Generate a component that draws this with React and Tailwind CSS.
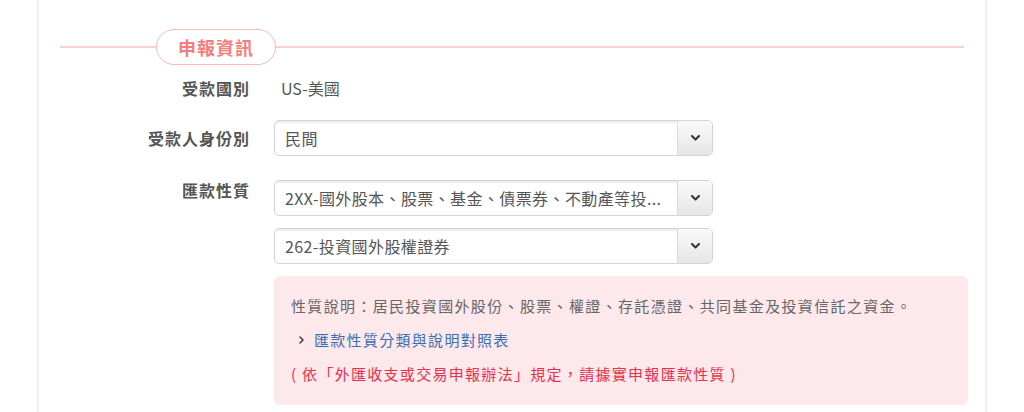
import React from 'react';

const font = { fontFamily: '"Noto Sans CJK TC", "Noto Sans", sans-serif' };

function Chevron() {
  return (
    <svg width="9" height="6" viewBox="0 0 9 6" fill="none">
      <path d="M1 1 L4.5 4.5 L8 1" stroke="#333" strokeWidth="2" strokeLinecap="round" strokeLinejoin="round" />
    </svg>
  );
}

function Select({ value }) {
  return (
    <div className="flex h-[36px] w-[439px] overflow-hidden rounded-[5px] border border-[#d4d4d4] bg-white shadow-[inset_0_2px_2px_rgba(0,0,0,0.08)]">
      <div className="flex flex-1 items-center overflow-hidden whitespace-nowrap pl-[10px] text-[16px] tracking-[0.4px] text-[#555]">
        {value}
      </div>
      <div className="flex w-[35px] items-center justify-center border-l border-[#dcdcdc] bg-gradient-to-b from-[#fafafa] to-[#e6e6e6]">
        <Chevron />
      </div>
    </div>
  );
}

function Row({ label, children, className = '' }) {
  return (
    <div className={`flex ${className}`}>
      <div className="w-[190px] shrink-0 text-right text-[16px] font-semibold tracking-[1px] text-[#555]">{label}</div>
      <div className="ml-[24px] flex flex-col gap-[12px]">{children}</div>
    </div>
  );
}

export default function App() {
  return (
    <div className="min-h-[412px] bg-white" style={font}>
      <div className="mx-auto h-[412px] w-[950px] border-x-2 border-[#eeeeee] px-[21px] pt-[29px]">
        {/* section title */}
        <div className="relative flex items-center">
          <div className="absolute left-0 right-0 top-1/2 h-[2px] -translate-y-1/2 bg-[#fdd0d0]" />
          <div className="relative ml-[96px] flex h-[36px] w-[120px] items-center justify-center rounded-full border border-[#fbb7b7] bg-white text-[18px] font-semibold tracking-[1px] text-[#f77d7d]">
            申報資訊
          </div>
        </div>

        <Row label="受款國別" className="mt-[11px] leading-[24px]">
          <div className="pl-[7px] text-[16px] text-[#555]">US-美國</div>
        </Row>

        <Row label="受款人身份別" className="mt-[20px] items-center">
          <Select value="民間" />
        </Row>

        <Row label="匯款性質" className="mt-[24px] leading-[20px]">
          <Select value="2XX-國外股本、股票、基金、債票券、不動產等投..." />
          <Select value="262-投資國外股權證券" />
          <div className="w-[694px] rounded-[6px] bg-[#fde8ec] px-[17px] pb-[20px] pt-[19px] text-[15px]">
            <p className="leading-[22px] tracking-[1.35px] text-[#666]">
              性質說明：居民投資國外股份、股票、權證、存託憑證、共同基金及投資信託之資金。
            </p>
            <p className="mt-[12px] flex items-center leading-[22px] text-[#3b6fae]">
              <svg width="14" height="10" viewBox="0 0 14 10" className="mr-[3px] ml-[6px]" fill="none">
                <path d="M3 2 L6 5 L3 8" stroke="#444" strokeWidth="1.6" strokeLinecap="round" strokeLinejoin="round" />
              </svg>
              <span className="tracking-[1.3px]">匯款性質分類與說明對照表</span>
            </p>
            <p className="mt-[12px] leading-[22px] tracking-[1.3px] text-[#e8304a]">
              ( 依「外匯收支或交易申報辦法」規定，請據實申報匯款性質 )
            </p>
          </div>
        </Row>
      </div>
    </div>
  );
}
